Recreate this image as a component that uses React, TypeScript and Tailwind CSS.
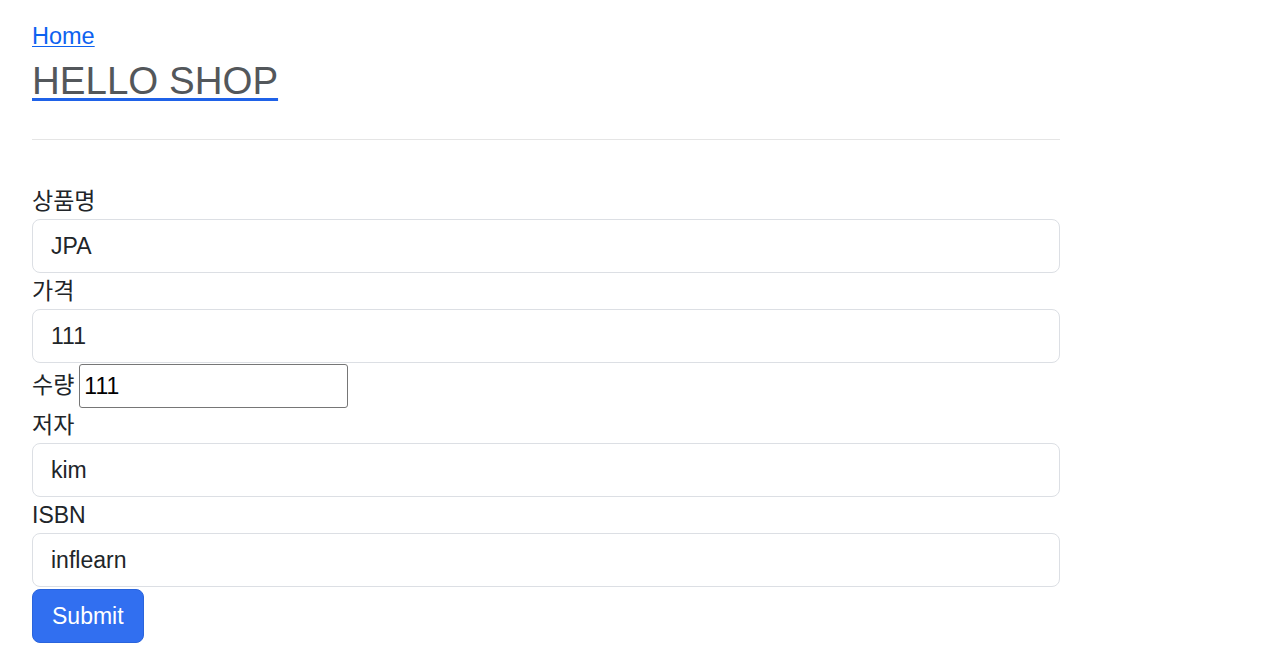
const fields = [
  { label: "상품명", value: "JPA" },
  { label: "가격", value: "111" },
];

const fieldsAfter = [
  { label: "저자", value: "kim" },
  { label: "ISBN", value: "inflearn" },
];

function Field({ label, value }: { label: string; value: string }) {
  return (
    <div>
      <label className="block leading-[36px]">{label}</label>
      <input
        defaultValue={value}
        className="block w-full h-[54px] px-[18px] border border-[#dcdfe4] rounded-[8px] text-[#212529] outline-none"
      />
    </div>
  );
}

export default function App() {
  return (
    <div
      className="min-h-[660px] bg-white text-[23px] text-[#212529] px-[32px] pt-[19px]"
      style={{ fontFamily: '"Liberation Sans", "Noto Sans CJK KR", sans-serif' }}
    >
      <div className="w-[1028px]">
        <a href="#" className="block w-fit leading-[34px] text-[23.5px] text-[#0d62f0] underline underline-offset-[2px] decoration-[1px]">
          Home
        </a>
        <a
          href="#"
          className="block w-fit mt-[5px] text-[38.5px] leading-[46px] text-[#53575b] underline decoration-[#1f62e8] decoration-[3px] underline-offset-[4px]"
        >
          HELLO SHOP
        </a>
        <hr className="mt-[35px] border-0 border-t border-[#e5e5e5]" />

        <form className="mt-[43px]" onSubmit={(e) => e.preventDefault()}>
          {fields.map((f) => (
            <Field key={f.label} label={f.label} value={f.value} />
          ))}

          <div className="flex items-center h-[44px] gap-[5px]">
            <label>수량</label>
            <input
              defaultValue="111"
              className="h-[44px] w-[269px] mt-[2px] px-[4px] border border-[#767676] rounded-[3px] text-black outline-none"
            />
          </div>

          {fieldsAfter.map((f) => (
            <Field key={f.label} label={f.label} value={f.value} />
          ))}

          <button
            type="submit"
            className="mt-[2px] h-[54px] px-[19px] bg-[#316ff0] border border-[#2a64dc] rounded-[8px] text-white"
          >
            Submit
          </button>
        </form>
      </div>
    </div>
  );
}
